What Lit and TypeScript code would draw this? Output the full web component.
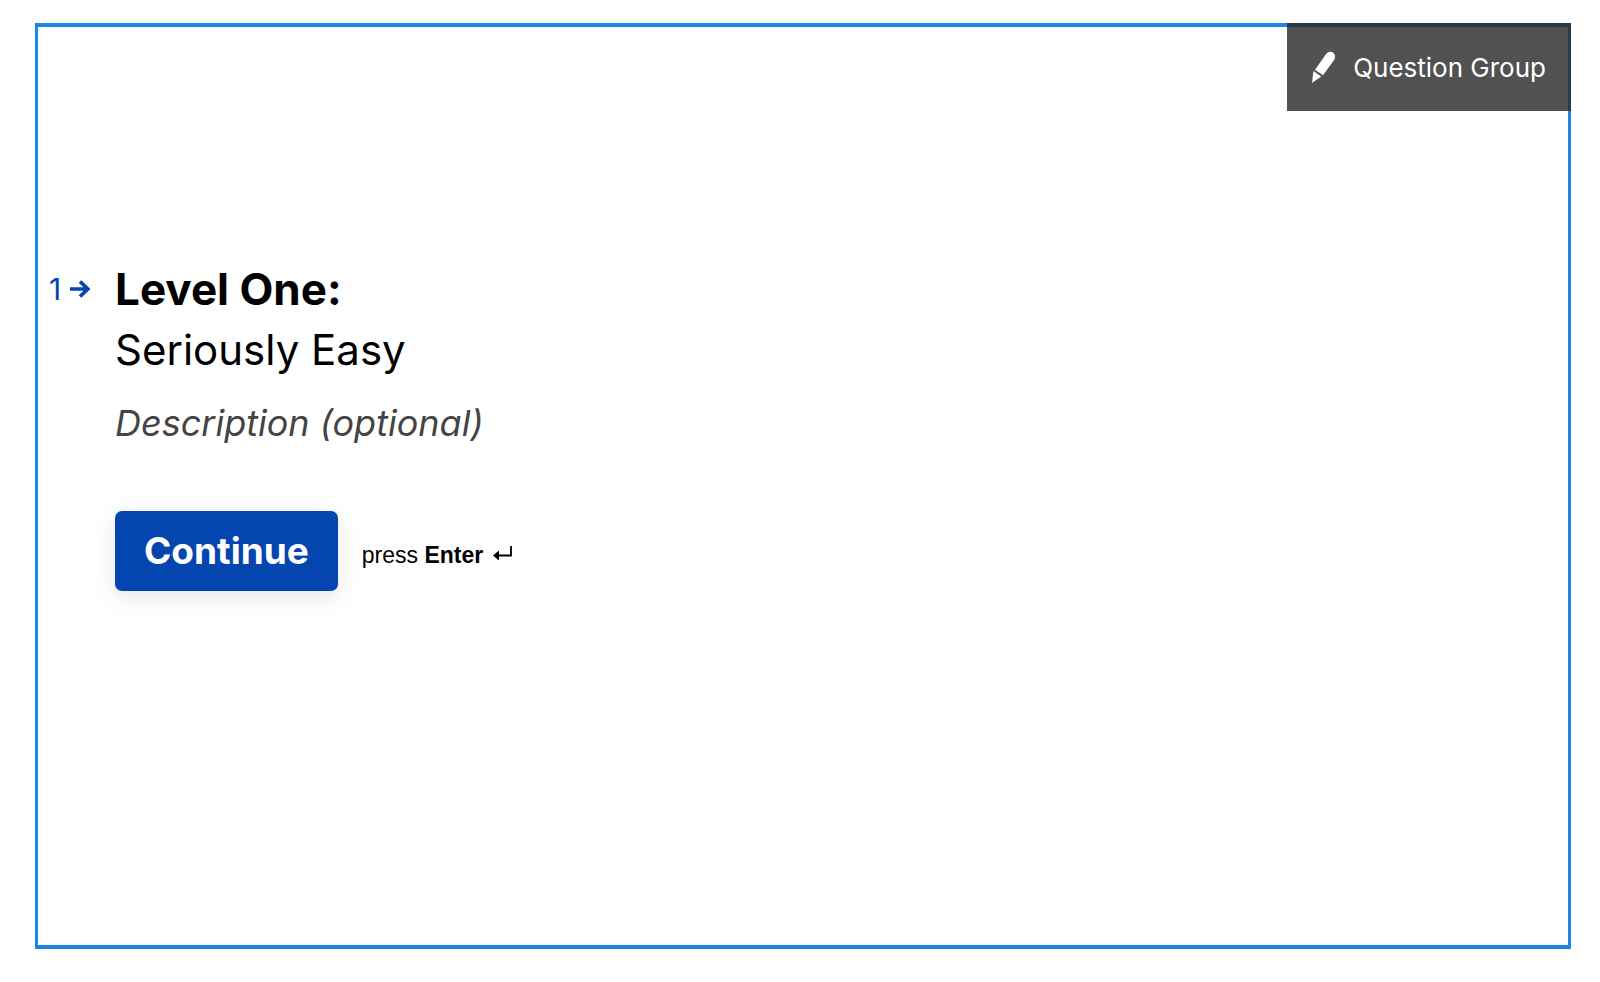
import { LitElement, html, css } from "lit";
import { customElement } from "lit/decorators.js";

@customElement("app-root")
export class AppRoot extends LitElement {
  static styles = css`
    :host {
      display: flex;
      box-sizing: border-box;
      min-height: 100vh;
      padding: 23px 29px 33px 35px;
      background: #fff;
      color: #000;
      font-family: Inter, "Liberation Sans", sans-serif;
    }
    .frame {
      position: relative;
      flex: 1;
      box-sizing: border-box;
      border: solid #1c86e6;
      border-width: 4px 3px;
      padding: 232px 12px 40px 11px;
    }
    .badge {
      position: absolute;
      top: -4px;
      right: -3px;
      display: flex;
      align-items: center;
      gap: 14px;
      height: 88px;
      padding: 2px 25px 0 24px;
      border: 0;
      background: rgba(43, 43, 43, 0.82);
      color: #fff;
      font: 400 26px/32px Inter, sans-serif;
      cursor: pointer;
    }
    .badge svg {
      width: 28px;
      height: 34px;
    }
    .question {
      display: grid;
      grid-template-columns: 42px 1fr;
      column-gap: 24px;
    }
    .number {
      display: flex;
      align-items: center;
      justify-content: space-between;
      height: 60px;
      color: #0445af;
      font-size: 30px;
      line-height: 60px;
    }
    .number svg {
      width: 21px;
      height: 18px;
    }
    h1 {
      margin: 0;
      font-size: 42px;
      line-height: 62px;
      font-weight: 400;
    }
    h1 strong {
      display: block;
      font-size: 44px;
      line-height: 60px;
      font-weight: 700;
    }
    .description {
      margin: 14px 0 0;
      color: #444;
      font-size: 36px;
      line-height: 56px;
      font-style: italic;
    }
    .actions {
      display: flex;
      align-items: center;
      gap: 24px;
      margin-top: 60px;
    }
    .continue {
      height: 80px;
      padding: 0 29px;
      border: 0;
      border-radius: 7px;
      background: #0445af;
      color: #fff;
      box-shadow: 0 6px 24px rgba(0, 0, 0, 0.1);
      font: 700 37px/48px Inter, sans-serif;
      cursor: pointer;
    }
    .hint {
      display: flex;
      align-items: center;
      gap: 10px;
      padding-top: 8px;
      font: 400 23px/32px "Liberation Sans", Arial, sans-serif;
    }
    .hint svg {
      width: 19px;
      height: 18px;
    }
  `;

  render() {
    return html`
      <main class="frame">
        <button class="badge" type="button">
          <svg viewBox="0 0 28 34" fill="#fff" aria-hidden="true">
            <path d="M15 3.200C17.300.3 20.200.2 22.200 1.700c2.300 1.800 2.400 4.700.9 7.200L12 24.200 4 18.800z" />
            <path d="M2.400 20 10.200 25.400 1 32z" />
          </svg>
          <span>Question Group</span>
        </button>
        <section class="question">
          <div class="number">
            <span>1</span>
            <svg viewBox="0 0 21 18" fill="none" stroke="#0445af" stroke-width="3.700" aria-hidden="true">
              <path d="M0 9h18M10 1.500 17.800 9 10 16.500" />
            </svg>
          </div>
          <div>
            <h1><strong>Level One:</strong>Seriously Easy</h1>
            <p class="description">Description (optional)</p>
            <div class="actions">
              <button class="continue" type="button">Continue</button>
              <div class="hint">
                <span>press <strong>Enter</strong></span>
                <svg viewBox="0 0 19 18" aria-hidden="true">
                  <path d="M18 0v9.500H4" fill="none" stroke="#000" stroke-width="1.800" />
                  <path d="M0 9.500 6 4.500v10z" />
                </svg>
              </div>
            </div>
          </div>
        </section>
      </main>
    `;
  }
}
